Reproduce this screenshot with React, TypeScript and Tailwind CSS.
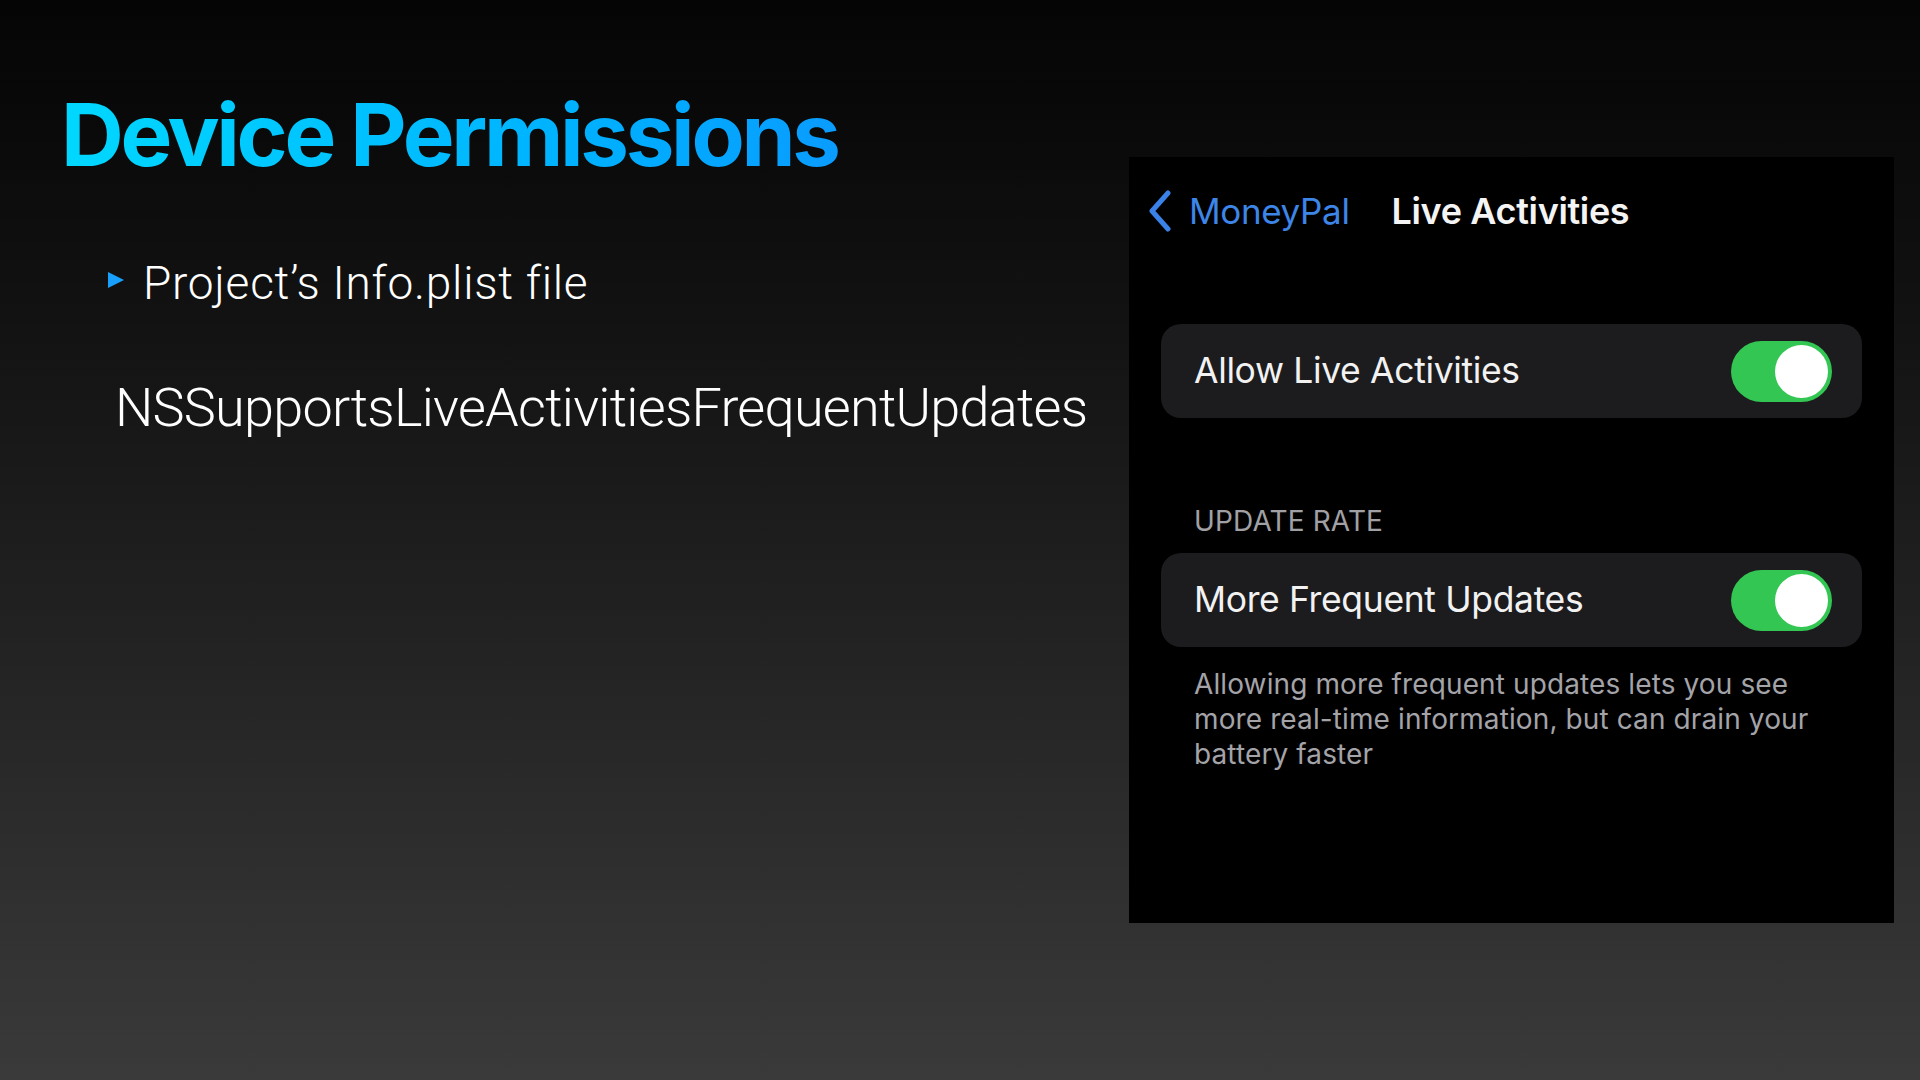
import React from "react";

const Toggle = () => (
  <div className="relative w-[101px] h-[61px] rounded-full bg-[#33c653] shrink-0">
    <div className="absolute right-[4px] top-[4px] w-[53px] h-[53px] rounded-full bg-white" />
  </div>
);

const Row = ({ label }: { label: string }) => (
  <div className="flex items-center justify-between h-[94px] rounded-[20px] bg-[#1c1c1e] pl-[33px] pr-[30px]">
    <span className="text-[35.5px] text-[#f2f2f2] tracking-[-0.01em]">{label}</span>
    <Toggle />
  </div>
);

export default function App() {
  return (
    <div className="flex w-full h-screen overflow-hidden bg-gradient-to-b from-[#050505] to-[#3a3a3a] font-['Inter',sans-serif]">
      {/* Slide text */}
      <div className="flex-1 flex flex-col pl-[61px] pt-[91px]">
        <h1 className="text-[87px] font-bold leading-none tracking-[-0.038em] bg-gradient-to-r from-[#00d8ff] to-[#0a9cff] bg-clip-text text-transparent w-fit pb-[6px]">
          Device Permissions
        </h1>

        <div className="flex items-center mt-[76px] ml-[47px] font-['Roboto',sans-serif] font-light text-white">
          <svg width="17" height="16" viewBox="0 0 17 16" className="mr-[18px] mt-[-6px]">
            <polygon points="0,0 16,8 0,16" fill="#19a0ff" />
          </svg>
          <span className="text-[46px] leading-none tracking-[0.016em]">Project’s Info.plist file</span>
        </div>

        <div className="mt-[75px] ml-[54px] font-['Roboto',sans-serif] font-light text-white text-[54px] leading-none tracking-[-0.014em]">
          NSSupportsLiveActivitiesFrequentUpdates
        </div>
      </div>

      {/* iOS settings screenshot */}
      <div className="w-[765px] h-[766px] mt-[157px] mr-[26px] bg-black flex flex-col">
        <div className="flex items-center h-[66px] mt-[21px] pl-[18px]">
          <svg width="26" height="42" viewBox="0 0 26 42" className="mr-[16px]">
            <path d="M21 3 L5 21 L21 39" stroke="#3b82e8" strokeWidth="5" fill="none" strokeLinecap="round" strokeLinejoin="round" />
          </svg>
          <span className="text-[35px] text-[#3d85e6] tracking-[-0.01em]">MoneyPal</span>
          <span className="text-[36px] font-semibold text-[#f4f4f4] ml-[42px] tracking-[-0.01em]">Live Activities</span>
        </div>

        <div className="px-[32px] mt-[80px]">
          <Row label="Allow Live Activities" />
        </div>

        <div className="px-[32px] mt-[89px]">
          <div className="pl-[33px] text-[28px] text-[#a0a0a5] tracking-[0.005em] leading-none mb-[18px]">UPDATE RATE</div>
          <Row label="More Frequent Updates" />
          <p className="pl-[33px] pr-[30px] mt-[20px] text-[28px] leading-[35px] text-[#a3a3a8] tracking-[0.004em]">
            Allowing more frequent updates lets you see
            <br />
            more real-time information, but can drain your
            <br />
            battery faster
          </p>
        </div>
      </div>
    </div>
  );
}
